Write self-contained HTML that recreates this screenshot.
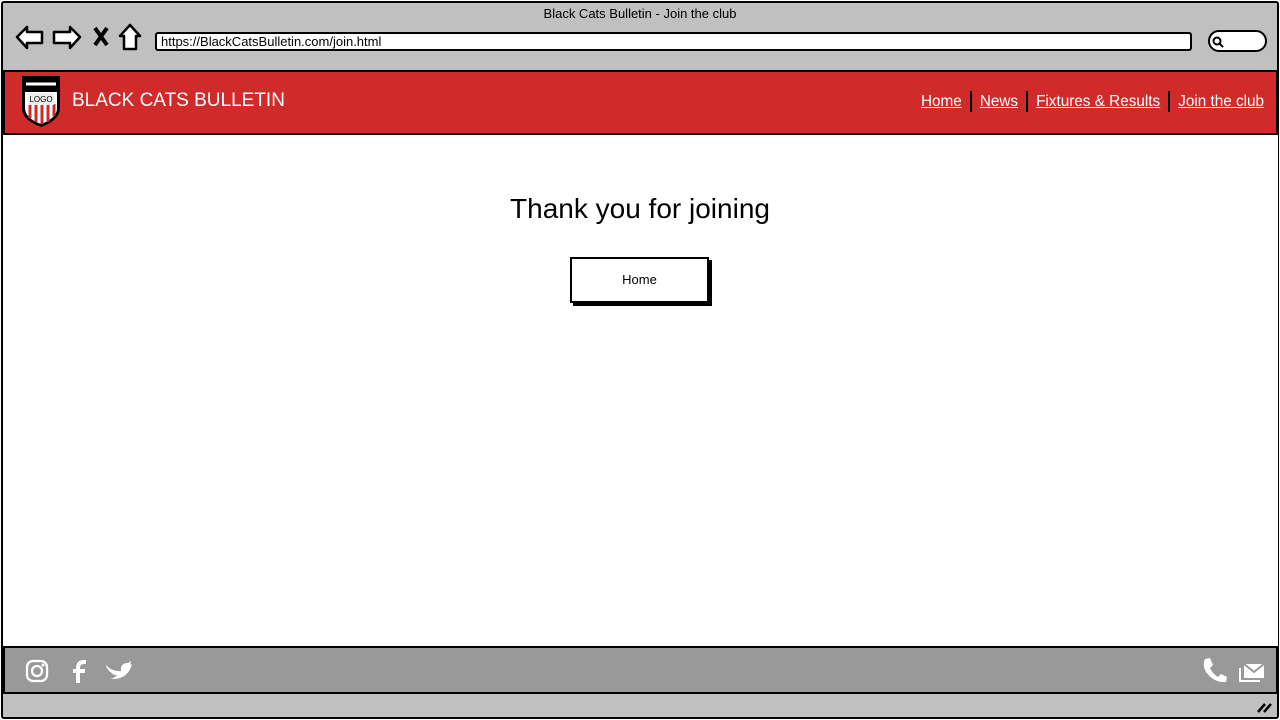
<!DOCTYPE html>
<html><head><meta charset="utf-8"><style>
*{box-sizing:border-box;margin:0;padding:0}
body{width:1280px;height:720px;background:#fff;position:relative;overflow:hidden;font-family:"Liberation Sans",sans-serif}
.abs{position:absolute}
</style></head><body>
<div class="abs" style="left:1px;top:1px;width:1278px;height:718px;border:2px solid #000;background:#c0c0c0;border-radius:3px"></div>
<div class="abs" style="left:0;top:6px;width:1280px;text-align:center;font-size:13px">Black Cats Bulletin - Join the club</div>
<svg class="abs" style="left:14px;top:22px" width="130" height="30" viewBox="0 0 130 30" fill="#fff" stroke="#000" stroke-width="2.5" stroke-linejoin="round">
<path d="M3 15 L13 5 L13 10 L28 10 L28 21 L13 21 L13 26 Z"/>
<path d="M66 15 L56 5 L56 10 L40 10 L40 21 L56 21 L56 26 Z"/>
<path d="M81 6 L93 23 M93 6 L81 23" stroke-width="4" fill="none"/>
<path d="M116 3 L106 14 L110 14 L110 27 L122 27 L122 14 L126 14 Z"/>
</svg>
<div class="abs" style="left:155px;top:32px;width:1037px;height:19px;background:#fff;border:2px solid #000;border-radius:3px;font-size:13px;line-height:15px;padding-left:4px">https://BlackCatsBulletin.com/join.html</div>
<div class="abs" style="left:1208px;top:30px;width:59px;height:22px;background:#fff;border:2.5px solid #000;border-radius:11px"></div>
<svg class="abs" style="left:1212px;top:36px" width="12" height="12"><circle cx="5" cy="5" r="3.5" fill="none" stroke="#000" stroke-width="2"/><path d="M7.5 7.5 L11 11" stroke="#000" stroke-width="2"/></svg>
<div class="abs" style="left:3px;top:70px;width:1275px;height:65px;background:#d02a2a;border:2px solid #000"></div>
<svg class="abs" style="left:20px;top:74px" width="42" height="54" viewBox="0 0 42 54">
<path d="M2 2 H40 V34 Q40 46 21 53 Q2 46 2 34 Z" fill="#000"/>
<path d="M5 18 H37 V34 Q37 44 21 50 Q5 44 5 34 Z" fill="#fff"/>
<path d="M10 30 V44 M16 30 V48 M22 30 V50 M28 30 V48 M34 30 V42" stroke="#d02a2a" stroke-width="3"/>
<rect x="8" y="19" width="26" height="12" fill="#eee"/>
<text x="21" y="28" font-size="8" text-anchor="middle" font-family="Liberation Sans">LOGO</text>
<path d="M6 10 H36" stroke="#fff" stroke-width="3"/>
</svg>
<div class="abs" style="left:72px;top:90px;color:#fff;font-size:19px">BLACK CATS BULLETIN</div>
<div class="abs" style="left:921px;top:91px;color:#fff;font-size:15.3px;display:flex;align-items:center">
<span style="text-decoration:underline">Home</span><span style="width:2px;height:21px;background:#000;margin:0 8px"></span>
<span style="text-decoration:underline">News</span><span style="width:2px;height:21px;background:#000;margin:0 8px"></span>
<span style="text-decoration:underline">Fixtures &amp; Results</span><span style="width:2px;height:21px;background:#000;margin:0 8px"></span>
<span style="text-decoration:underline">Join the club</span></div>
<div class="abs" style="left:3px;top:135px;width:1275px;height:511px;background:#fff"></div>
<div class="abs" style="left:0;top:193px;width:1280px;text-align:center;font-size:28px">Thank you for joining</div>
<div class="abs" style="left:573px;top:260px;width:139px;height:46px;background:#000"></div>
<div class="abs" style="left:570px;top:257px;width:139px;height:46px;background:#fff;border:2px solid #000;text-align:center;line-height:42px;font-size:13px">Home</div>
<div class="abs" style="left:3px;top:646px;width:1275px;height:48px;background:#999;border:2px solid #000"></div>
<svg class="abs" style="left:24px;top:658px" width="110" height="26" fill="none" stroke="#fff">
<rect x="3" y="3" width="20" height="20" rx="6" stroke-width="2.3"/><circle cx="13" cy="13" r="5" stroke-width="2.3"/><circle cx="19" cy="7" r="1" fill="#fff"/>
<path d="M54 25 V10 Q54 4 60 4 H62 M49 13 H61" stroke-width="4"/>
<path d="M82 7 Q88 14 97 13 Q96 5 104 5 L107 3 L106 7 L108 6 Q104 22 86 21 Q91 20 93 17 Q88 17 87 14 Q85 14 84 11 Q82 10 82 7Z" fill="#fff" stroke="none"/>
</svg>
<svg class="abs" style="left:1200px;top:656px" width="66" height="28" fill="#fff">
<path d="M5 3 L10 2 L13 9 L10 12 Q13 18 18 21 L21 18 L27 21 L26 26 Q14 27 6 16 Q2 9 5 3Z"/>
<path d="M44 8 H64 V22 H44 Z"/><path d="M44 8 L54 16 L64 8" stroke="#999" stroke-width="2" fill="none"/>
<path d="M40 12 V25 H60" stroke="#fff" stroke-width="2" fill="none"/>
</svg>
<svg class="abs" style="left:1256px;top:700px" width="18" height="14" stroke="#000" stroke-width="2.5"><path d="M2 12 L9 4 M8 12 L15 4"/></svg>
</body></html>
